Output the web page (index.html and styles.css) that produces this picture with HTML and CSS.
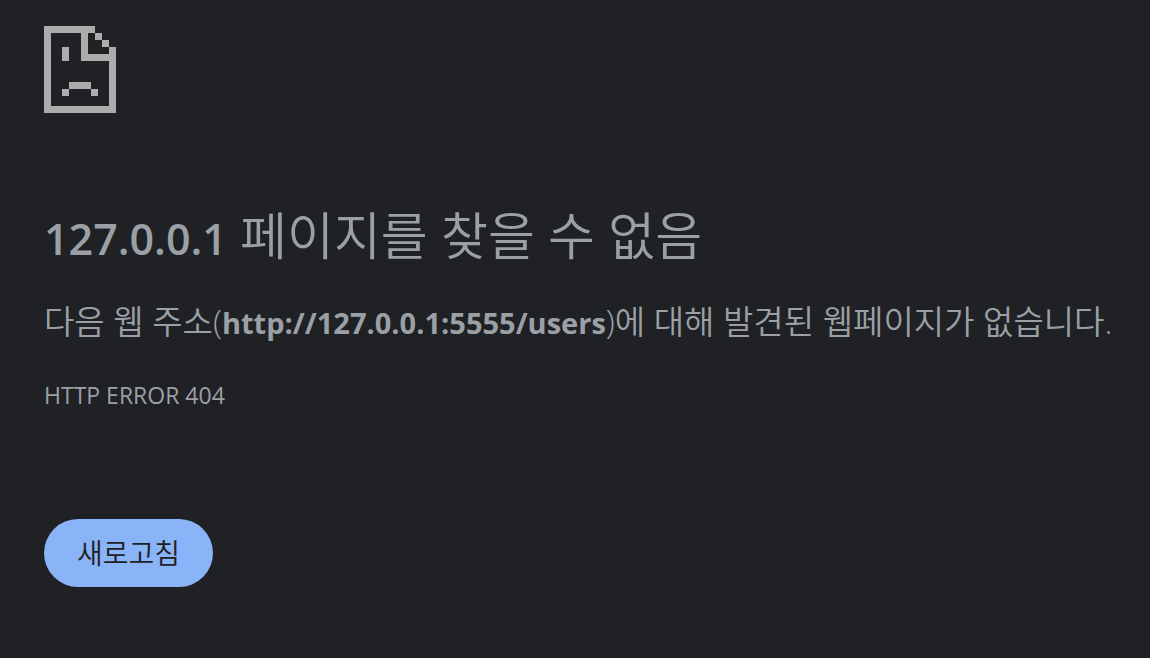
FILE: index.html
```html
<!DOCTYPE html>
<html lang="ko">
<head>
<meta charset="utf-8">
<meta name="viewport" content="width=device-width, initial-scale=1">
<title>127.0.0.1</title>
<link rel="stylesheet" href="styles.css">
</head>
<body>
<main class="error-page">
  <svg class="error-icon" viewBox="0 0 72 87" shape-rendering="crispEdges" aria-hidden="true">
    <path fill="currentColor" fill-rule="evenodd" d="M0 0H51V7H58V14H65V21H72V87H0ZM7 7V80H65V35H37V7ZM44 7V28H65V21H58V14H51V7Z"/>
    <path fill="currentColor" d="M18 21H25V35H18ZM25 56H47V63H25ZM18 63H25V70H18ZM47 63H54V70H47Z"/>
  </svg>
  <h1 class="error-title"><span class="host">127.0.0.1</span> 페이지를 찾을 수 없음</h1>
  <p class="error-summary">다음 웹 주소(<strong>http://127.0.0.1:5555/users</strong>)에 대해 발견된 웹페이지가 없습니다.</p>
  <p class="error-code">HTTP ERROR 404</p>
  <button class="reload-button" type="button">새로고침</button>
</main>
</body>
</html>
```
FILE: styles.css
```css
body {
  margin: 0;
  background: #202124;
  color: #9aa0a6;
  font-family: "Open Sans", "Noto Sans CJK KR", sans-serif;
}

.error-page {
  padding: 26px 24px 26px 44px;
}

.error-icon {
  display: block;
  width: 72px;
  height: 87px;
  color: #acacac;
}

.error-title {
  margin: 90px 0 0;
  font-size: 51px;
  font-weight: 350;
  line-height: 64px;
}

.host {
  font-size: 43px;
  font-weight: 600;
}

.error-summary {
  margin: 29px 0 0;
  font-size: 33px;
  font-weight: 350;
  line-height: 44px;
}

.error-summary strong {
  font-size: 29px;
  font-weight: 700;
}

.error-code {
  margin: 34px 0 0;
  font-size: 23px;
  line-height: 32px;
}

.reload-button {
  display: block;
  margin: 108px 0 0;
  padding: 16px 33px;
  border: 0;
  border-radius: 34px;
  background: #8ab4f8;
  color: #202124;
  font: inherit;
  font-size: 28px;
  font-weight: 350;
  line-height: 36px;
}
```
